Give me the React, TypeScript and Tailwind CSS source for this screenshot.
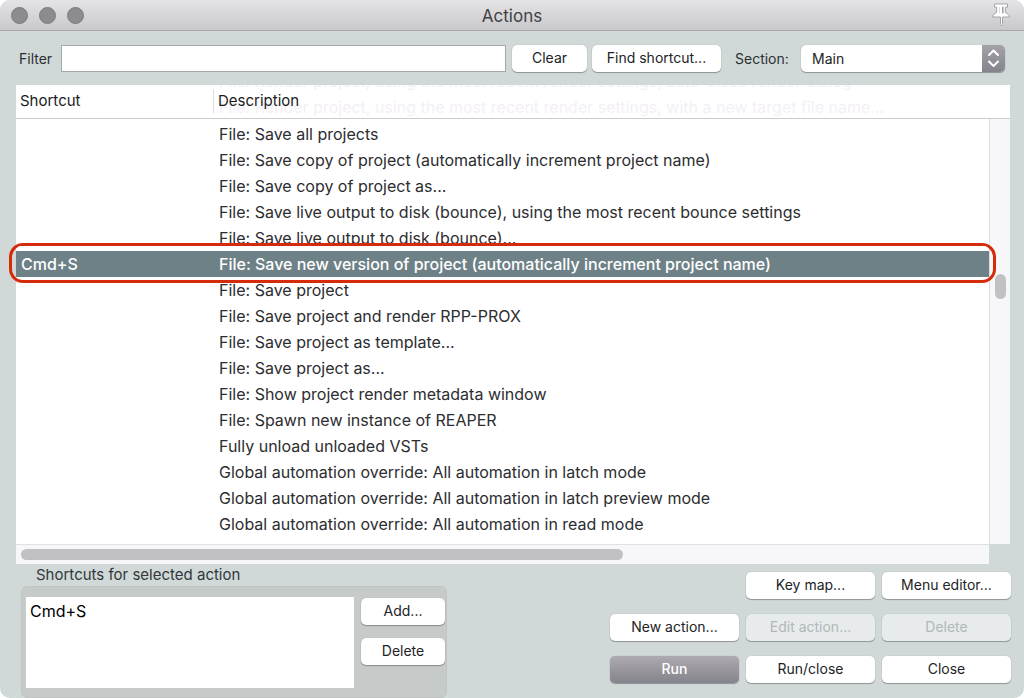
import React from "react";

const actions = [
  { shortcut: "", name: "File: Save all projects" },
  { shortcut: "", name: "File: Save copy of project (automatically increment project name)" },
  { shortcut: "", name: "File: Save copy of project as..." },
  { shortcut: "", name: "File: Save live output to disk (bounce), using the most recent bounce settings" },
  { shortcut: "", name: "File: Save live output to disk (bounce)..." },
  { shortcut: "Cmd+S", name: "File: Save new version of project (automatically increment project name)" },
  { shortcut: "", name: "File: Save project" },
  { shortcut: "", name: "File: Save project and render RPP-PROX" },
  { shortcut: "", name: "File: Save project as template..." },
  { shortcut: "", name: "File: Save project as..." },
  { shortcut: "", name: "File: Show project render metadata window" },
  { shortcut: "", name: "File: Spawn new instance of REAPER" },
  { shortcut: "", name: "Fully unload unloaded VSTs" },
  { shortcut: "", name: "Global automation override: All automation in latch mode" },
  { shortcut: "", name: "Global automation override: All automation in latch preview mode" },
  { shortcut: "", name: "Global automation override: All automation in read mode" },
];

type ButtonProps = {
  children: React.ReactNode;
  className?: string;
  disabled?: boolean;
  primary?: boolean;
};

function Button({ children, className = "", disabled, primary }: ButtonProps) {
  const look = primary
    ? "bg-linear-to-b from-[#adabb0] to-[#85838b] font-medium text-white"
    : disabled
      ? "bg-[#e7ebeb] text-[#b2b7b8]"
      : "bg-white text-[#222326]";
  return (
    <button
      type="button"
      disabled={disabled}
      className={`h-[27px] shrink-0 rounded-[5px] pb-px text-center text-sm leading-5 whitespace-nowrap shadow-[0_0_1px_rgba(0,0,0,0.25),0_1px_1px_rgba(0,0,0,0.3)] ${look} ${className}`}
    >
      {children}
    </button>
  );
}

function TitleBar() {
  return (
    <header className="relative flex h-[31px] items-center justify-between border-b border-[#a9a7a9] bg-linear-to-b from-[#e4e3e6] to-[#c9c8cb] pr-3 pl-[11px]">
      <div className="flex gap-[11px]">
        <span className="size-[17px] rounded-full border border-[#7c7b80] bg-[#8c8b90]" />
        <span className="size-[17px] rounded-full border border-[#7c7b80] bg-[#8c8b90]" />
        <span className="size-[17px] rounded-full border border-[#7c7b80] bg-[#8c8b90]" />
      </div>
      <h1 className="absolute inset-x-0 pt-px text-center text-[17px] leading-6 text-[#414044]">Actions</h1>
      <svg viewBox="0 0 22 24" className="relative h-6 w-[22px]" aria-hidden="true">
        <path
          d="M4.500 1h13v3.200h-2.200v5.300c2 .8 3.700 2 4.200 4.500h-7V21.500l-1 1.500-1-1.500V14h-8c.5-2.500 2.200-3.700 4.200-4.500V4.200H4.500z"
          fill="#fff"
          stroke="#a3a2a6"
          strokeWidth="1"
          strokeLinejoin="round"
        />
        <path d="M9.500 4v6.500" stroke="#dcdbde" strokeWidth="1" />
        <path d="M12.800 3.500v7" stroke="#a3a2a6" strokeWidth="1.500" />
      </svg>
    </header>
  );
}

function Toolbar() {
  return (
    <div className="flex items-center px-[19px] pt-[14px] text-sm text-[#2d3032]">
      <label htmlFor="filter" className="w-[42px] shrink-0">Filter</label>
      <input id="filter" className="h-[27px] min-w-0 flex-1 border border-[#a3a8a9] bg-white px-2 outline-none" />
      <Button className="ml-[6px] w-[75px]">Clear</Button>
      <Button className="ml-[5px] w-[129px]">Find shortcut...</Button>
      <label htmlFor="section" className="ml-[14px] w-[66px] shrink-0">Section:</label>
      <div className="relative w-[204px] shrink-0">
        <select
          id="section"
          className="block h-[27px] w-full appearance-none rounded-[5px] bg-white pl-[11px] text-sm text-[#222326] shadow-[0_0_1px_rgba(0,0,0,0.25),0_1px_1px_rgba(0,0,0,0.3)] outline-none"
        >
          <option>Main</option>
        </select>
        <svg
          viewBox="0 0 23 27"
          className="pointer-events-none absolute top-0 right-0 h-[27px] w-[23px] rounded-r-[5px] bg-linear-to-b from-[#a5a3a9] to-[#85838b]"
          aria-hidden="true"
        >
          <path d="M7 10l4.500-4.500 4.500 4.500M7 16.500l4.500 4.500 4.500-4.500" fill="none" stroke="#fff" strokeWidth="2" strokeLinecap="round" strokeLinejoin="round" />
        </svg>
      </div>
    </div>
  );
}

function ActionList() {
  return (
    <section className="relative mt-[13px] mr-[14px] ml-4">
      <div className="flex bg-white">
        <div className="relative min-w-0 flex-1">
          <div className="pointer-events-none absolute top-0 left-[203px] h-8 overflow-hidden text-base whitespace-nowrap text-[#f4eff6]">
            <p className="-mt-[17px] leading-[26px]">File: Render project, using the most recent render settings, auto-close render dialog</p>
            <p className="leading-[26px]">File: Render project, using the most recent render settings, with a new target file name...</p>
          </div>
          <table className="relative w-full table-fixed border-collapse text-left text-base text-[#2c2d30]">
            <thead>
              <tr className="h-[33px] border-b border-[#c9cccc] text-[15px] text-[#1b1b1d]">
                <th className="w-[197px] py-0 pl-1 font-normal">Shortcut</th>
                <th className="py-0 font-normal">
                  <div className="border-l border-[#dcdcde] pl-1 leading-6">Description</div>
                </th>
              </tr>
            </thead>
            <tbody>
              <tr className="h-[3px]">
                <td colSpan={2} className="p-0" />
              </tr>
              {actions.map((action) => (
                <tr key={action.name} className={action.shortcut ? "bg-[#6d8187] font-medium text-white" : ""}>
                  <td className="py-px pl-[5px] leading-6">{action.shortcut}</td>
                  <td className="py-px pl-[6px] leading-6 whitespace-nowrap">{action.name}</td>
                </tr>
              ))}
            </tbody>
          </table>
          <div className="h-[7px]" />
        </div>
        <div className="flex w-[21px] flex-col">
          <div className="h-[34px] border-b border-[#c9cccc]" />
          <div className="flex-1 border-l border-[#dddce2] bg-[#f7f6f8] pt-[155px] pl-[5px]">
            <div className="h-[25px] w-[11px] rounded-full bg-[#c1c0c2]" />
          </div>
        </div>
      </div>
      <div className="mr-[21px] h-[20px] border-t border-[#e0dfe3] bg-[#f7f6f8] px-[5px] pt-1">
        <div className="h-[11px] w-5/8 rounded-full bg-[#c1c0c2]" />
      </div>
      <div className="pointer-events-none absolute top-[158px] right-[14px] -left-[7px] h-10 rounded-[14px] border-3 border-[#d62b0b]">
        <div className="mx-1 h-[5px] rounded-t-lg bg-white" />
      </div>
    </section>
  );
}

function SelectedShortcuts() {
  return (
    <section className="w-[426px] shrink-0">
      <h2 className="pl-[15px] text-[15px] leading-[22px] text-[#33373a]">Shortcuts for selected action</h2>
      <div className="flex rounded-md border border-[#c0c5c4] bg-[#c6cbca] pt-[10px] pr-px pb-[9px] pl-1">
        <ul className="h-[91px] flex-1 bg-white pt-[2px] pl-1 text-base text-black">
          <li>Cmd+S</li>
        </ul>
        <div className="ml-[7px] flex w-[84px] flex-col gap-[13px] pt-px">
          <Button>Add...</Button>
          <Button>Delete</Button>
        </div>
      </div>
    </section>
  );
}

export default function App() {
  return (
    <div className="bg-white font-['Inter','Liberation_Sans',sans-serif]">
      <main className="overflow-hidden rounded-[10px] bg-[#d0d9d8]">
        <TitleBar />
        <Toolbar />
        <ActionList />
        <div className="flex justify-between pr-[13px] pl-[21px]">
          <SelectedShortcuts />
          <div className="grid auto-rows-min grid-cols-[129px_129px_129px] gap-x-[7px] gap-y-[15px] pt-2">
            <Button className="col-start-2">Key map...</Button>
            <Button>Menu editor...</Button>
            <Button>New action...</Button>
            <Button disabled>Edit action...</Button>
            <Button disabled>Delete</Button>
            <Button primary>Run</Button>
            <Button>Run/close</Button>
            <Button>Close</Button>
          </div>
        </div>
      </main>
    </div>
  );
}
